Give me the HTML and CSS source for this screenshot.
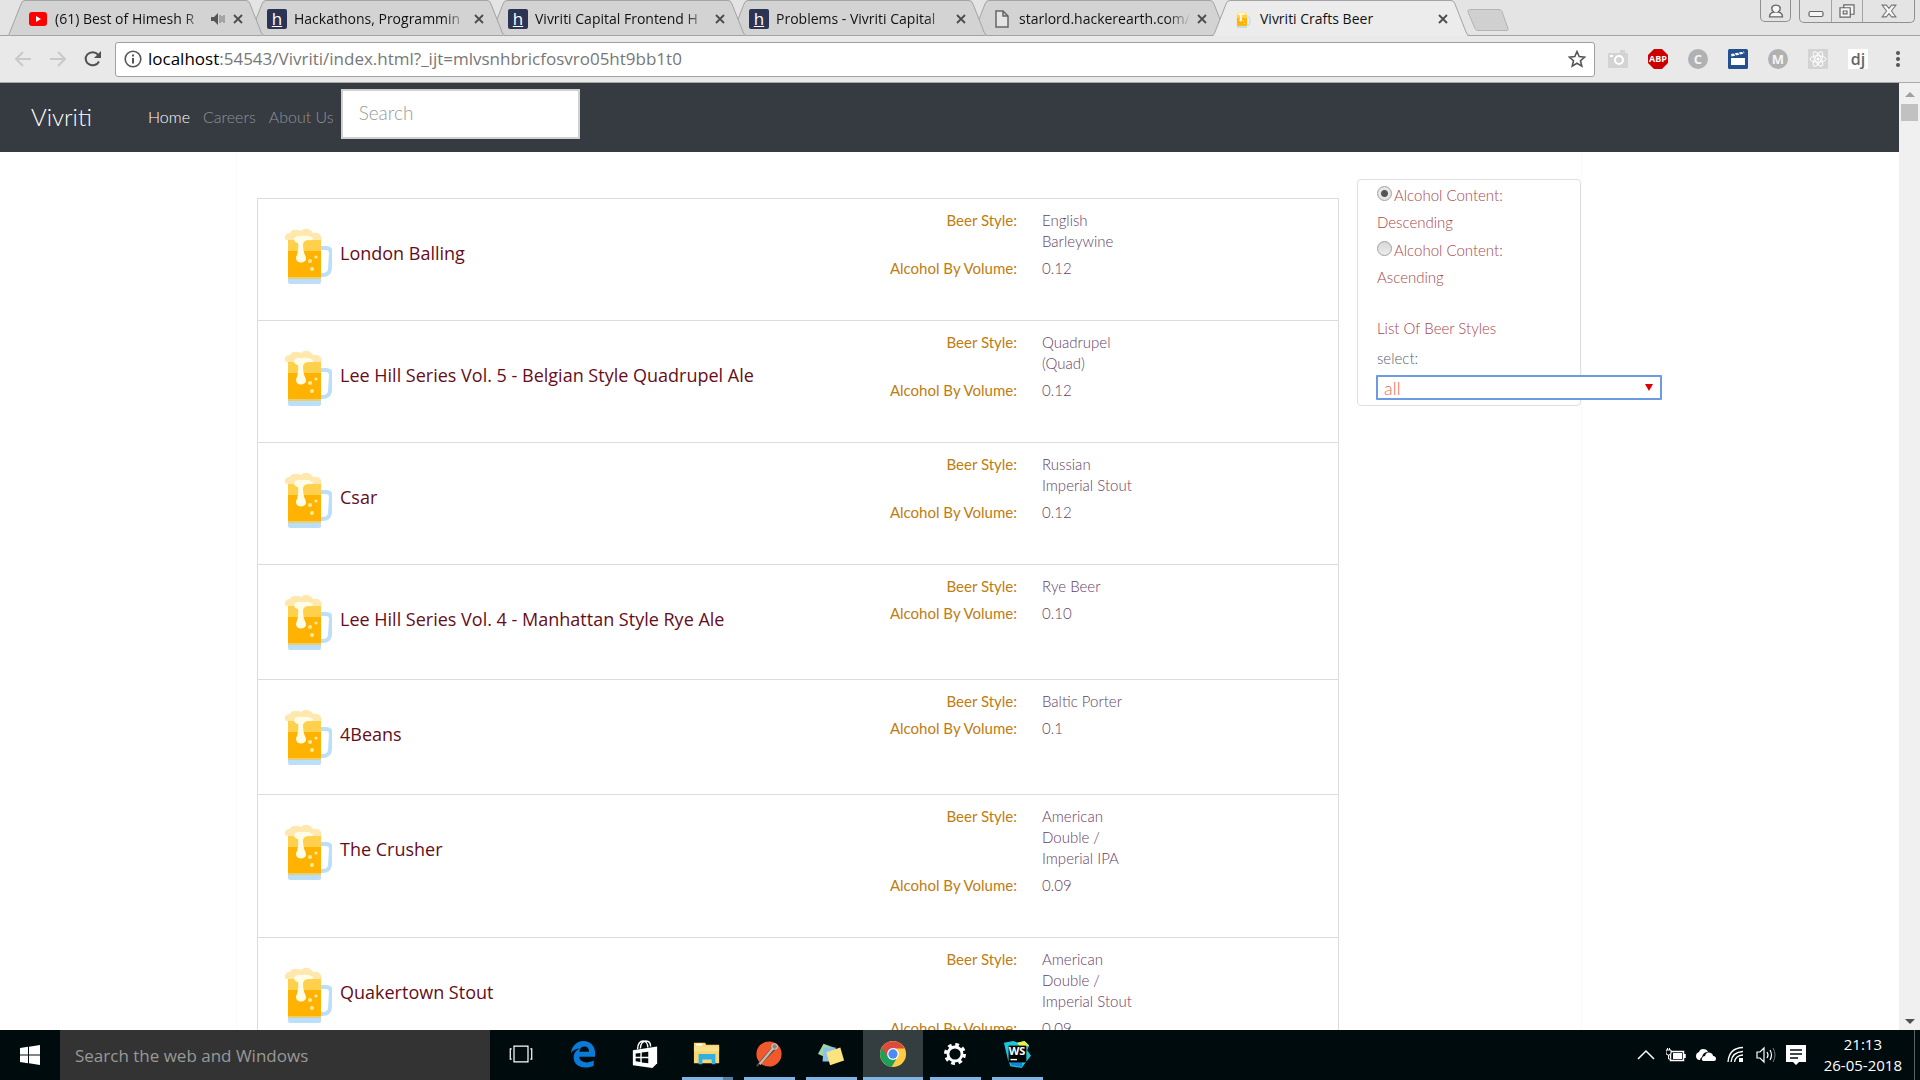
FILE: index.html
```html
<!DOCTYPE html>
<html lang="en">
<head>
<meta charset="utf-8">
<title>Vivriti Crafts Beer</title>
<link rel="stylesheet" href="styles.css">
</head>
<body>
<svg class="sprite" aria-hidden="true">
  <symbol id="tab-shape" viewBox="0 0 257 36" preserveAspectRatio="none"><path d="M0 35.5 C2 35 2 34 3 32 L14 4 Q15 .5 18 .5 H239 Q242 .5 243 4 L254 32 Q255 35 257 35.5" stroke="#a3a3a3"/></symbol>
  <symbol id="x" viewBox="0 0 10 10"><path d="M1 1 9 9M9 1 1 9" fill="none" stroke="#4c4c4c" stroke-width="1.8"/></symbol>
  <symbol id="beer" viewBox="0 0 48 56">
    <path d="M36 20h6q5 0 5 5l-1 16q-1 6-7 6h-3" fill="none" stroke="#bcdff9" stroke-width="4"/>
    <path d="M4 8h33v41H4z" fill="#ffb300"/>
    <path d="M4 10h33v13H4z" fill="#ffd04c"/>
    <path d="M4 50h33v4q0 2-2 2H6q-2 0-2-2z" fill="#bbdefb"/>
    <path d="M4 49h33v2H4z" fill="#e8cf74"/>
    <path d="M4 12Q0 12 1 8q1-3 5-3 2-4 7-3 3 0 4 1 4-4 9-1 2 1 3 3 6-1 8 3 2 4-1 4z" fill="#ffe8ad"/>
    <path d="M10 11q2-4 7-3 8-1 12 2 0 3-4 2-5 0-6 4 0 7 2 11 2 4 0 6-4 3-8 0-2-3 0-6 2-8 1-12-4-1-4-4z" fill="#fffde8"/>
    <circle cx="26" cy="33" r="2" fill="#ffeb99"/><circle cx="32" cy="29" r="1.6" fill="#ffeb99"/><circle cx="28" cy="41" r="2" fill="#ffeb99"/>
  </symbol>
</svg>

<header class="browser">
  <div class="strip">
    <ul class="tabs">
      <li class="tab">
        <svg class="tab-bg"><use href="#tab-shape"/></svg>
        <svg class="fav" viewBox="0 0 20 20"><rect x="1" y="3" width="18" height="14" rx="3" fill="#f00"/><path d="M8 7l5 3-5 3z" fill="#fff"/></svg>
        <span class="tab-title">(61) Best of Himesh R</span>
        <svg class="audio" viewBox="0 0 14 12"><path d="M0 4h3l4-4v12L3 8H0z" fill="#555"/><path d="M9 2v8M11 3v6M13 2v8" stroke="#777"/></svg>
        <button class="tab-close" aria-label="Close tab"><svg><use href="#x"/></svg></button>
      </li>
      <li class="tab">
        <svg class="tab-bg"><use href="#tab-shape"/></svg>
        <span class="fav he">h</span>
        <span class="tab-title">Hackathons, Programmin</span>
        <button class="tab-close" aria-label="Close tab"><svg><use href="#x"/></svg></button>
      </li>
      <li class="tab">
        <svg class="tab-bg"><use href="#tab-shape"/></svg>
        <span class="fav he">h</span>
        <span class="tab-title">Vivriti Capital Frontend H</span>
        <button class="tab-close" aria-label="Close tab"><svg><use href="#x"/></svg></button>
      </li>
      <li class="tab">
        <svg class="tab-bg"><use href="#tab-shape"/></svg>
        <span class="fav he">h</span>
        <span class="tab-title">Problems - Vivriti Capital</span>
        <button class="tab-close" aria-label="Close tab"><svg><use href="#x"/></svg></button>
      </li>
      <li class="tab">
        <svg class="tab-bg"><use href="#tab-shape"/></svg>
        <svg class="fav" viewBox="0 0 20 20"><path d="M4 2h7l5 5v11H4zM11 2v5h5" fill="#e4e4e4" stroke="#666" stroke-width="1.5"/></svg>
        <span class="tab-title">starlord.hackerearth.com/</span>
        <button class="tab-close" aria-label="Close tab"><svg><use href="#x"/></svg></button>
      </li>
      <li class="tab active">
        <svg class="tab-bg"><use href="#tab-shape"/></svg>
        <svg class="fav beer-fav"><use href="#beer"/></svg>
        <span class="tab-title">Vivriti Crafts Beer</span>
        <button class="tab-close" aria-label="Close tab"><svg><use href="#x"/></svg></button>
      </li>
    </ul>
    <button class="new-tab" aria-label="New tab"><svg viewBox="0 0 42 22"><path d="M4 .5h28q2 0 3 2l6 17q1 2-2 2H11q-2 0-3-2L1 3Q0 .5 4 .5z" fill="#d0d0d0" stroke="#b3b3b3"/></svg></button>
    <div class="window-buttons">
      <button class="win user" aria-label="User"><svg viewBox="0 0 14 13"><path d="M1 12q0-4 4-4.500-2-1-2-4Q4 1 7 1t4 2.500q0 3-2 4 4 .5 4 4.500z" fill="#f6f6f6" stroke="#666" stroke-width="1.300"/></svg></button>
      <div class="win-group">
        <button class="win" aria-label="Minimize"><svg class="mini" viewBox="0 0 16 13"><rect x="1" y="7" width="14" height="5" rx="1.500" fill="#f6f6f6" stroke="#666" stroke-width="1.200"/></svg></button>
        <button class="win" aria-label="Restore"><svg viewBox="0 0 17 15"><path d="M5 1h11v10h-4v3H1V4h4z" fill="#f6f6f6" stroke="#666" stroke-width="1.300"/><path d="M5 4h7v7M4.500 7.500h4v3h-4z" fill="none" stroke="#666" stroke-width="1.300"/></svg></button>
        <button class="win wide" aria-label="Close"><svg viewBox="0 0 15 13"><path d="M1 1h4l2.500 3L10 1h4L9.800 6.500 14 12h-4L7.500 9 5 12H1l4.200-5.500z" fill="#f6f6f6" stroke="#777"/></svg></button>
      </div>
    </div>
  </div>
  <div class="toolbar">
    <button class="nav-btn" aria-label="Back"><svg viewBox="0 0 18 16"><path d="M17 8H2M9 1 2 8l7 7" fill="none" stroke="#c9c9c9" stroke-width="2"/></svg></button>
    <button class="nav-btn" aria-label="Forward"><svg viewBox="0 0 18 16"><path d="M1 8h15M9 1l7 7-7 7" fill="none" stroke="#c9c9c9" stroke-width="2"/></svg></button>
    <button class="nav-btn" aria-label="Reload"><svg viewBox="0 0 18 16"><path d="M15 10.500A7 6.500 0 1 1 14 3.500" fill="none" stroke="#505050" stroke-width="2"/><path d="M17 0v7h-7z" fill="#505050"/></svg></button>
    <div class="omnibox">
      <svg class="info" viewBox="0 0 18 18"><circle cx="9" cy="9" r="7.800" fill="none" stroke="#555" stroke-width="1.600"/><path d="M9 4.500v2M9 8v5.500" stroke="#555" stroke-width="2"/></svg>
      <div class="url"><span class="host">localhost</span>:54543/Vivriti/index.html?_ijt=mlvsnhbricfosvro05ht9bb1t0</div>
      <button class="star" aria-label="Bookmark"><svg viewBox="0 0 18 18"><path d="M9 1.500l2.200 5.100 5.500.5-4.200 3.600 1.300 5.400L9 13.200l-4.800 2.900 1.300-5.400-4.200-3.600 5.500-.5z" fill="none" stroke="#555" stroke-width="1.600"/></svg></button>
    </div>
    <div class="extensions">
      <button class="ext" aria-label="Screenshot"><svg viewBox="0 0 20 20"><rect y="4" width="20" height="15" rx="1" fill="#d3d3d3"/><path d="M12 1h5v3h-5z" fill="#d3d3d3"/><circle cx="11" cy="11" r="4" fill="none" stroke="#fff" stroke-width="2"/><path d="M2 7h3" stroke="#fff" stroke-width="2"/></svg></button>
      <button class="ext abp" aria-label="AdBlock Plus">ABP</button>
      <button class="ext round" aria-label="C">C</button>
      <button class="ext" aria-label="Clips"><svg viewBox="0 0 20 20"><rect width="20" height="20" rx="1.500" fill="#24508f"/><path d="M3 9h14v7H3zM3 5l13-2.500.4 2L3.500 7.500z" fill="#fff"/><path d="M6 4l2 3M10 3l2 3M14 2l2 3M5 8.500h11" stroke="#24508f"/></svg></button>
      <button class="ext round" aria-label="M">M</button>
      <button class="ext" aria-label="React"><svg viewBox="0 0 20 20"><rect width="20" height="20" rx="1" fill="#d3d3d3"/><g fill="none" stroke="#fff"><ellipse cx="10" cy="10" rx="8" ry="3.200"/><ellipse cx="10" cy="10" rx="8" ry="3.200" transform="rotate(60 10 10)"/><ellipse cx="10" cy="10" rx="8" ry="3.200" transform="rotate(120 10 10)"/></g><circle cx="10" cy="10" r="1.500" fill="#fff"/></svg></button>
      <button class="ext dj" aria-label="Django">dj</button>
      <button class="ext" aria-label="Menu"><svg viewBox="0 0 20 20"><g fill="#555"><circle cx="10" cy="4" r="2"/><circle cx="10" cy="10" r="2"/><circle cx="10" cy="16" r="2"/></g></svg></button>
    </div>
  </div>
</header>

<div class="viewport">
  <div class="page">
    <nav class="navbar">
      <a class="brand" href="#">Vivriti</a>
      <a class="nav-link current" href="#">Home</a>
      <a class="nav-link" href="#">Careers</a>
      <a class="nav-link" href="#">About Us</a>
      <input class="search" type="text" placeholder="Search" aria-label="Search">
    </nav>
    <main class="container">
      <ul class="beers">
        <li class="beer"><svg class="mug"><use href="#beer"/></svg><h2 class="name">London Balling</h2>
          <dl class="facts"><dt>Beer Style:</dt><dd>English Barleywine</dd><dt>Alcohol By Volume:</dt><dd>0.12</dd></dl></li>
        <li class="beer"><svg class="mug"><use href="#beer"/></svg><h2 class="name">Lee Hill Series Vol. 5 - Belgian Style Quadrupel Ale</h2>
          <dl class="facts"><dt>Beer Style:</dt><dd>Quadrupel (Quad)</dd><dt>Alcohol By Volume:</dt><dd>0.12</dd></dl></li>
        <li class="beer"><svg class="mug"><use href="#beer"/></svg><h2 class="name">Csar</h2>
          <dl class="facts"><dt>Beer Style:</dt><dd>Russian Imperial Stout</dd><dt>Alcohol By Volume:</dt><dd>0.12</dd></dl></li>
        <li class="beer"><svg class="mug"><use href="#beer"/></svg><h2 class="name">Lee Hill Series Vol. 4 - Manhattan Style Rye Ale</h2>
          <dl class="facts"><dt>Beer Style:</dt><dd>Rye Beer</dd><dt>Alcohol By Volume:</dt><dd>0.10</dd></dl></li>
        <li class="beer"><svg class="mug"><use href="#beer"/></svg><h2 class="name">4Beans</h2>
          <dl class="facts"><dt>Beer Style:</dt><dd>Baltic Porter</dd><dt>Alcohol By Volume:</dt><dd>0.1</dd></dl></li>
        <li class="beer"><svg class="mug"><use href="#beer"/></svg><h2 class="name">The Crusher</h2>
          <dl class="facts"><dt>Beer Style:</dt><dd>American Double / Imperial IPA</dd><dt>Alcohol By Volume:</dt><dd>0.09</dd></dl></li>
        <li class="beer"><svg class="mug"><use href="#beer"/></svg><h2 class="name">Quakertown Stout</h2>
          <dl class="facts"><dt>Beer Style:</dt><dd>American Double / Imperial Stout</dd><dt>Alcohol By Volume:</dt><dd>0.09</dd></dl></li>
      </ul>
      <aside class="filters">
        <label class="option"><input type="radio" name="sort" checked>Alcohol Content: Descending</label>
        <label class="option"><input type="radio" name="sort">Alcohol Content: Ascending</label>
        <p class="list-title">List Of Beer Styles</p>
        <label class="select-label" for="style">select:</label>
        <div class="select-wrap"><select id="style"><option>all</option></select></div>
      </aside>
    </main>
  </div>
  <div class="scrollbar"><span class="arrow up"></span><span class="thumb"></span><span class="arrow down"></span></div>
</div>

<footer class="taskbar">
  <button class="start" aria-label="Start"><svg viewBox="0 0 20 20"><path d="M0 3l8-1.200V9.500H0zM9 1.700 20 0v9.500H9zM0 10.500h8v7.700L0 17zM9 10.500h11V20L9 18.300z" fill="#fff"/></svg></button>
  <input class="task-search" type="text" placeholder="Search the web and Windows" aria-label="Search the web and Windows">
  <div class="apps">
    <button class="app" aria-label="Task view"><svg viewBox="0 0 30 30"><path d="M7.500 6.500h15v17h-15zM5 9.500H3.500v11H5M25 9.500h1.500v11H25" fill="none" stroke="#fff" stroke-width="1.300"/></svg></button>
    <button class="app" aria-label="Edge"><svg viewBox="0 0 30 30"><path d="M2 14C3 6 9 1 15.500 1 23 1 28 7 28 13.500V18H11c0 4 4 6 8 6 3 0 5-1 7.500-2v5.500c-2 1-5 2-9 2C10 29.500 5 25 5 18.500c0-5 3-8 7-9.500-4 0-8 2-10 5zm9-1.500h10.500c0-3.500-2-5.500-5-5.500s-5 2-5.500 5.500z" fill="#0a7bd8"/></svg></button>
    <button class="app" aria-label="Store"><svg viewBox="0 0 30 30"><path d="M2 11l26-4v18l-5 5-21-3z" fill="#fff"/><path d="M7 10C7 4 10 1 13 1s5 3 5 7M10 9c0-5 3-8 6-8s5 2 5 6" fill="none" stroke="#fff" stroke-width="1.500"/><path d="M5 14.500l5-.7V18H5zM11.500 13.500l7-1V18h-7zM5 19.500h5v4l-5-.6zM11.500 19.500h7V25l-7-1z" fill="#000b0e"/></svg></button>
    <button class="app open stacked" aria-label="File Explorer"><svg viewBox="0 0 30 30"><path d="M1 3h12l1 2h14v20H1z" fill="#f7d774"/><path d="M3 4h7v2H3z" fill="#fff"/><path d="M1 7h27v5H1z" fill="#fbe08c"/><path d="M6 15h18v11h-4v-5H10v5H6z" fill="#2eb0e4"/></svg></button>
    <button class="app open" aria-label="Postman"><svg viewBox="0 0 30 30"><circle cx="15" cy="15" r="13.500" fill="#f0592b"/><path d="M20 7 2 28M22 9 6 25" stroke="#574b45" stroke-width="2"/><path d="M20 8 5 26" stroke="#c9b9ae" stroke-width="2.500"/><circle cx="21" cy="7" r="3" fill="#8d8580" stroke="#ddd"/></svg></button>
    <button class="app open" aria-label="Sticky Notes"><svg viewBox="0 0 30 30"><path d="M7 4l11 4-5 12L1 15z" fill="#9fd6a1"/><path d="M7 8h13v15H6z" fill="#8cc0f0"/><path d="M10 13l15-5 4 14-15 5z" fill="#fbe37e"/></svg></button>
    <button class="app open focus" aria-label="Chrome"><svg viewBox="0 0 30 30"><circle cx="15" cy="15" r="14" fill="#fc4"/><path d="M15 15 3 8A14 14 0 0 0 13.500 28.900L20 18z" fill="#1da05a"/><path d="M3 8A14 14 0 0 1 27.500 9H15l-6 9z" fill="#dd4b3e"/><circle cx="15" cy="15" r="6.300" fill="#fff"/><circle cx="15" cy="15" r="5" fill="#4b8bf5"/></svg></button>
    <button class="app open" aria-label="Settings"><svg viewBox="0 0 30 30"><circle cx="15" cy="15" r="9.500" fill="none" stroke="#fff" stroke-width="4.500" stroke-dasharray="3.730 3.730"/><circle cx="15" cy="15" r="7.500" fill="none" stroke="#fff" stroke-width="3"/></svg></button>
    <button class="app open ws" aria-label="WebStorm"><svg viewBox="0 0 30 30"><path d="M1 3l10-2 5 2 7-2 5 5-2 5 4 6-5 6-5 7-12-2-3-8z" fill="#1fc6d8"/><path d="M15 3l8-2 5 5-8 3z" fill="#e9f04e"/><path d="M7 22l13 1 1 6-12-2z" fill="#1583cf"/><path d="M6 6h19v18H6z" fill="#000"/><path d="M8 21h7" stroke="#fff" stroke-width="1.500"/></svg><span>WS</span></button>
  </div>
  <div class="tray">
    <svg class="tray-icon" viewBox="0 0 20 20"><path d="M2 14l8-8 8 8" fill="none" stroke="#fff" stroke-width="1.500"/></svg>
    <svg class="tray-icon" viewBox="0 0 20 20"><path d="M4.500 6.500h13v9h-13zM19 9v4" fill="none" stroke="#fff" stroke-width="1.500"/><path d="M7 8h9v6H7z" fill="#fff"/><path d="M0 5h5v3q0 2-2.500 2T0 8zM1.500 3v2M3.500 3v2M2.500 10v4h2" fill="#000b0e" stroke="#fff"/></svg>
    <svg class="tray-icon" viewBox="0 0 20 20"><path d="M3 15q-3-1-3-4t3-4q1-3 4-3 4 0 5 3-5 0-6 5-2 1-2 3z" fill="#fff"/><path d="M7 16q-2-1-1-3 1-2 3-2 1-4 4-3.500 4 .5 4 3.500 3 0 3 3 0 2-2 2z" fill="#fff"/></svg>
    <svg class="tray-icon" viewBox="0 0 20 20"><g fill="none" stroke="#fff" stroke-width="1.300"><path d="M2 17Q3 3 17 2.500"/><path d="M5 17Q6 7 17 6.500"/><path d="M8.500 17Q9.500 10.500 17 10"/></g><path d="M13 13h4v4h-4z" fill="#fff"/></svg>
    <svg class="tray-icon" viewBox="0 0 20 20"><path d="M1 7h3l4-4v14l-4-4H1z" fill="none" stroke="#fff" stroke-width="1.200"/><path d="M11 7q2 3 0 6M14 5q3 5 0 10" fill="none" stroke="#fff" stroke-width="1.200"/><path d="M17 3q4 7 0 14" fill="none" stroke="#777"/></svg>
    <svg class="tray-icon" viewBox="0 0 20 20"><path d="M0 0h20v17h-7l-3 3-3-3H0z" fill="#fff"/><path d="M4 5h12M4 9h12M4 13h8" stroke="#000b0e" stroke-width="1.300"/></svg>
    <div class="clock"><span>21:13</span><span>26-05-2018</span></div>
  </div>
</footer>
</body>
</html>
```
FILE: styles.css
```css
* { box-sizing: border-box; }

body {
  margin: 0;
  height: 100vh;
  display: flex;
  flex-direction: column;
  overflow: hidden;
  font-family: "Lato", sans-serif;
  background: #fff;
}

button { padding: 0; border: 0; background: none; font-family: inherit; }
ul, dl, dd, h2, p { margin: 0; padding: 0; }
a { text-decoration: none; }
svg { display: block; }
.sprite { position: absolute; width: 0; height: 0; }

/* Browser tabs */
.browser { flex: none; font-family: "Open Sans", sans-serif; background: #e9e9e9; }
.strip { display: flex; height: 36px; padding-left: 7px; background: #e4e4e4; box-shadow: inset 0 -1px #a3a3a3; }
.tabs { display: flex; list-style: none; }
.tab {
  position: relative;
  display: flex;
  align-items: center;
  width: 257px;
  height: 36px;
  margin-right: -16px;
  padding: 2px 21px 0;
}
.tab:nth-child(1) { z-index: 5; }
.tab:nth-child(2) { z-index: 4; }
.tab:nth-child(3) { z-index: 3; }
.tab:nth-child(4) { z-index: 2; }
.tab:nth-child(5) { z-index: 1; }
.tab.active { z-index: 6; }
.tab-bg { position: absolute; inset: 0; z-index: -1; width: 100%; height: 100%; fill: #d3d3d3; }
.active .tab-bg { fill: #ececec; }
.tab::after { content: ""; position: absolute; left: 2px; right: 2px; bottom: 0; height: 1px; background: #a3a3a3; }
.tab.active::after { background: #ececec; }
.fav { flex: none; width: 20px; height: 20px; margin-right: 7px; }
.beer-fav { height: 17px; }
.he {
  margin-left: -2px;
  border-radius: 2px;
  background: #2c3454;
  color: #fff;
  font-size: 17px;
  line-height: 19px;
  text-align: center;
  text-decoration: underline;
}
.tab-title {
  flex: 1;
  min-width: 0;
  white-space: nowrap;
  font-size: 14px;
  line-height: 20px;
  color: #111;
  margin-right: 6px;
  -webkit-mask-image: linear-gradient(to right, #000 86%, transparent);
  mask-image: linear-gradient(to right, #000 86%, transparent);
}
.active .tab-title { -webkit-mask-image: none; mask-image: none; }
.audio { flex: none; width: 14px; height: 12px; margin-right: 8px; }
.tab-close svg { width: 10px; height: 10px; }
.new-tab { align-self: center; margin-left: 14px; padding-top: 3px; }
.new-tab svg { width: 42px; height: 22px; }

.window-buttons { display: flex; align-items: flex-start; margin-left: auto; padding-right: 5px; gap: 8px; }
.win { display: flex; align-items: center; justify-content: center; width: 31px; height: 22px; }
.win svg { height: 14px; width: 16px; }
.user, .win-group { border: 1px solid #8f8f8f; border-top: 0; border-radius: 0 0 5px 5px; }
.win-group { display: flex; }
.win-group .win + .win { border-left: 1px solid #a3a3a3; }
.win-group .wide { width: 52px; }

/* Address bar */
.toolbar { display: flex; align-items: center; height: 47px; padding: 0 12px 0 14px; border-bottom: 1px solid #a9a9a9; }
.nav-btn { margin-right: 17px; }
.nav-btn svg { width: 18px; height: 16px; }
.nav-btn:nth-child(3) { margin-right: 13px; }
.omnibox {
  flex: 1;
  display: flex;
  align-items: center;
  height: 35px;
  padding: 0 8px;
  border: 1px solid #a0a0a0;
  border-radius: 3px;
  background: #fff;
}
.info { width: 18px; height: 18px; margin-right: 6px; }
.url { flex: 1; font-size: 17px; line-height: 24px; color: #777; }
.host { color: #000; }
.star svg { width: 18px; height: 18px; }
.extensions { display: flex; margin-left: 13px; gap: 20px; }
.ext { width: 20px; height: 20px; font-size: 11px; line-height: 20px; font-weight: 700; }
.ext svg { width: 20px; height: 20px; }
.abp {
  background: #c00;
  color: #fff;
  font-size: 9px;
  clip-path: polygon(30% 0, 70% 0, 100% 30%, 100% 70%, 70% 100%, 30% 100%, 0 70%, 0 30%);
}
.round { border-radius: 50%; background: #b1b1b1; color: #f4f4f4; font-size: 13px; }
.dj { background: #fff; color: #666; font-size: 16px; line-height: 16px; font-weight: 600; }

/* Page */
.viewport { flex: 1; min-height: 0; display: flex; }
.page { flex: 1; overflow: hidden; }
.navbar { display: flex; align-items: center; height: 69px; padding: 0 31px 3px; background: #363a41; }
.brand { width: 117px; color: #fff; font-size: 24px; font-weight: 300; }
.nav-link { margin-right: 13px; color: #90939a; font-size: 16px; font-weight: 300; }
.nav-link.current { color: #fff; }
.search {
  width: 239px;
  height: 50px;
  margin: 0 0 4px -6px;
  padding: 0 16px 4px;
  border: 2px solid #d0d0d0;
  background: #fff;
  font: 300 19px "Lato", sans-serif;
}
.search::placeholder { color: #999; }

.container {
  display: flex;
  align-items: flex-start;
  margin: 0 317px 0 236px;
  padding: 27px 0 0 20px;
  border: solid #fafafa;
  border-width: 0 1px;
}
.beers { flex: 1; margin: 19px 18px 0 0; border: 1px solid #dcdcdc; list-style: none; }
.beer { display: flex; min-height: 115px; padding: 11px 0 0 26px; border-bottom: 1px solid #dcdcdc; }
.mug { flex: none; width: 48px; height: 56px; margin: 18px 8px 0 0; }
.name { flex: 1; margin-top: 31px; color: #650d1b; font: 400 18px/24px "Open Sans", sans-serif; }
.facts {
  display: grid;
  grid-template-columns: 160px 100px;
  column-gap: 25px;
  row-gap: 6px;
  align-content: start;
  margin-right: 196px;
  padding-bottom: 41px;
  font-size: 15px;
  line-height: 21px;
}
.facts dt { color: #c07c10; text-align: right; }
.facts dd { color: #654069; font-weight: 300; }

.filters {
  width: 224px;
  height: 227px;
  padding: 2px 19px;
  border: 1px solid #dfdfdf;
  border-radius: 4px;
  color: #a8464f;
  font-size: 15px;
  font-weight: 300;
  line-height: 27px;
}
.option { display: block; margin-bottom: 1px; }
.option input {
  width: 15px;
  height: 15px;
  margin: 0 2px 0 0;
  appearance: none;
  border: 1px solid #a0a0a0;
  border-radius: 50%;
  background: linear-gradient(#d8d8d8, #ececec);
}
.option input:checked { background: radial-gradient(circle, #555 0 3px, #e6e6e6 4px); }
.list-title { margin-top: 24px; line-height: 26px; }
.select-label { display: block; margin: 4px 0; line-height: 26px; color: #59616a; }
.select-wrap { position: relative; width: 286px; margin-left: -1px; }
.select-wrap::after {
  content: "";
  position: absolute;
  top: 9px;
  right: 9px;
  border: solid transparent;
  border-width: 7px 4px 0;
  border-top-color: #e00000;
}
select {
  display: block;
  width: 100%;
  height: 25px;
  padding: 0 6px;
  appearance: none;
  border: 2px solid #6c9be0;
  border-radius: 1px;
  background: #fff;
  color: #f0685e;
  font: 300 18px/20px "Lato", sans-serif;
}

.scrollbar { display: flex; flex-direction: column; align-items: center; width: 21px; padding: 9px 0 6px; background: #f0f0f0; }
.arrow { border: solid transparent; border-width: 0 5px 5px; border-bottom-color: #a0a0a0; }
.arrow.down { margin-top: auto; border-width: 5px 5px 0; border-top-color: #505050; }
.thumb { width: 17px; height: 17px; margin-top: 7px; background: #c1c1c1; }

/* Taskbar */
.taskbar { flex: none; display: flex; height: 50px; background: #000b0e; font-family: "Open Sans", sans-serif; }
.start { width: 60px; }
.start svg { width: 20px; height: 20px; margin: auto; }
.task-search { width: 430px; padding: 0 15px; border: 0; background: #333; font: 400 17px "Open Sans", sans-serif; }
.task-search::placeholder { color: #999; }
.apps { display: flex; gap: 2px; padding-left: 1px; }
.app { position: relative; width: 60px; padding-bottom: 2px; }
.app svg { width: 28px; height: 28px; margin: auto; }
.app.open::after { content: ""; position: absolute; left: 5px; right: 4px; bottom: 0; height: 3px; background: #7fb5e5; }
.app.stacked::after { border-right: 10px solid #5580a5; }
.app.focus { background: #343e41; }
.app.focus::after { left: 0; right: 0; }
.ws span { position: absolute; top: 13px; left: 0; right: 0; color: #fff; font-size: 11px; line-height: 16px; font-weight: 700; text-align: center; }
.tray { display: flex; align-items: center; gap: 10px; margin: 0 5px 0 auto; padding-right: 12px; border-right: 1px solid #5a6265; }
.tray-icon { width: 20px; height: 20px; }
.clock { display: flex; flex-direction: column; align-items: center; margin-left: 8px; color: #fff; font-size: 15px; line-height: 21px; }
```
